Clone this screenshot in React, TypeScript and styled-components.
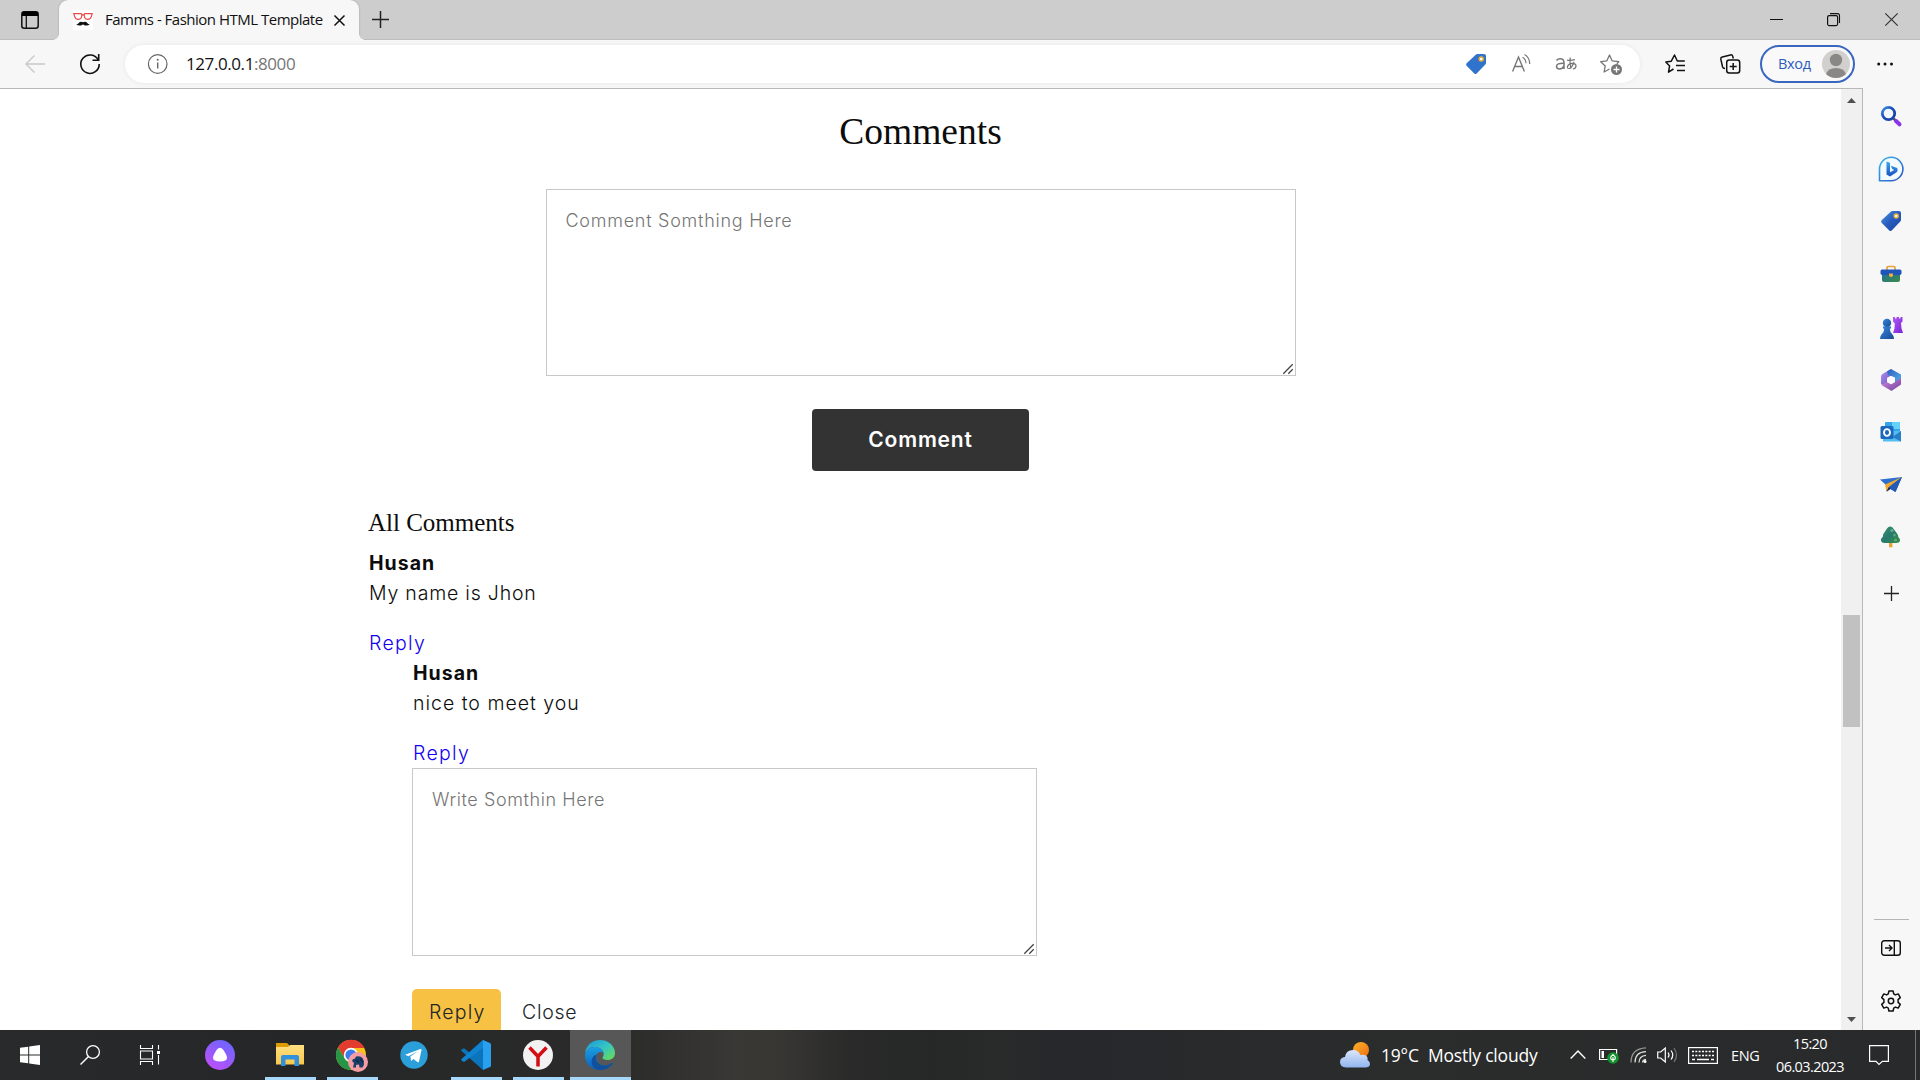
import React from "react";
import styled, { createGlobalStyle } from "styled-components";

const ui = `"Open Sans", "Noto Sans", sans-serif`;
const body = `Inter, "Open Sans", sans-serif`;
const serif = `"Liberation Serif", serif`;

const Global = createGlobalStyle`
  * { box-sizing: border-box; }
  html, body { margin: 0; padding: 0; background: #fff; overflow: hidden; }
  svg { display: block; flex: none; overflow: visible; }
  button { border: 0; background: none; padding: 0; margin: 0; font: inherit; color: inherit; }
`;

const Screen = styled.div`
  width: 1920px;
  height: 1080px;
  display: flex;
  flex-direction: column;
  overflow: hidden;
  font-family: ${ui};
`;

/* Title bar */
const TitleBar = styled.div`
  height: 40px;
  flex: none;
  display: flex;
  background: #cdcdcd;
  box-shadow: inset 0 -1px 0 #bdbdbd;
`;
const TabMenu = styled.div`
  width: 59px;
  padding: 11px 0 0 21px;
`;
const Tab = styled.div`
  position: relative;
  flex: none;
  width: 300px;
  height: 40px;
  display: flex;
  align-items: center;
  padding: 0 13px 0 14px;
  border-radius: 9px 9px 0 0;
  background: #f7f7f7;
  box-shadow: 0 0 2px rgba(0, 0, 0, 0.25);
  clip-path: inset(-3px -8px 0 -8px);
  &::before, &::after {
    content: "";
    position: absolute;
    bottom: 0;
    width: 6px;
    height: 6px;
  }
  &::before { left: -6px; background: radial-gradient(circle at 0 0, transparent 5.5px, #f7f7f7 6px); }
  &::after { right: -6px; background: radial-gradient(circle at 100% 0, transparent 5.5px, #f7f7f7 6px); }
`;
const TabTitle = styled.span`
  flex: none;
  width: 241px;
  padding: 0 0 2px 12px;
  white-space: nowrap;
  font-size: 15px;
  line-height: 20px;
  letter-spacing: -0.5px;
  color: #111;
`;
const NewTab = styled.div`
  padding: 11px 0 0 13px;
`;
const WindowControls = styled.div`
  display: flex;
  margin-left: auto;
  width: 173px;
  height: 40px;
  & > svg { margin-right: 37px; }
  padding: 0 0 0 17px;
`;

/* Toolbar */
const Toolbar = styled.div`
  height: 48px;
  flex: none;
  display: flex;
  align-items: center;
  background: #f7f7f7;
  padding-left: 25px;
`;
const Gap = styled.div<{ $w: number }>`
  width: ${(p) => p.$w}px;
  flex: none;
`;
const Omnibox = styled.div`
  width: 1515px;
  height: 38px;
  margin-left: 25px;
  border-radius: 19px;
  background: #fff;
  box-shadow: 0 0 5px rgba(0, 0, 0, 0.07);
  display: flex;
  align-items: center;
  padding-left: 23px;
`;
const Url = styled.span`
  width: 1297px;
  padding: 0 0 1px 18px;
  font-size: 17px;
  letter-spacing: -0.42px;
  line-height: 24px;
  color: #111;
  & > span { color: #767676; }
`;
const SignIn = styled.button`
  width: 95px;
  height: 38px;
  flex: none;
  border: 2px solid #3a66c0;
  border-radius: 19px;
  background: #f9f9f9;
  display: flex;
  align-items: center;
  justify-content: space-between;
  padding: 0 3px 0 16px;
  color: #2d5cbc;
  font-family: ${ui};
  font-size: 14.5px;
  line-height: 20px;
  letter-spacing: -0.3px;
`;

/* Page + sidebar */
const Main = styled.div`
  height: 942px;
  flex: none;
  display: flex;
  background: #f7f7f7;
`;
const Viewport = styled.div`
  width: 1863px;
  display: flex;
  background: #fff;
  border-top: 1px solid #b8b8b8;
  border-right: 1px solid #b8b8b8;
`;
const Page = styled.main`
  width: 1841px;
  height: 941px;
  overflow: hidden;
  display: flex;
  flex-direction: column;
  font-family: ${body};
  font-size: 19.5px;
  line-height: 30px;
  color: #0c0c0c;
`;
const Scrollbar = styled.div`
  width: 21px;
  background: #f0f0f0;
  display: flex;
  flex-direction: column;
  align-items: center;
`;
const Thumb = styled.div`
  width: 17px;
  height: 112px;
  background: #c1c1c1;
`;
const NewComment = styled.section`
  display: flex;
  flex-direction: column;
  align-items: center;
`;
const PageTitle = styled.h1`
  margin: 19px 0 0;
  height: 81px;
  font: 400 37.5px/48px ${serif};
`;
const FieldBox = styled.div<{ $w: number; $h: number }>`
  position: relative;
  flex: none;
  width: ${(p) => p.$w}px;
  height: ${(p) => p.$h}px;
  & > svg {
    position: absolute;
    right: 3px;
    bottom: 2px;
  }
`;
const Area = styled.textarea<{ $spacing: number }>`
  display: block;
  width: 100%;
  height: 100%;
  margin: 0;
  padding: 17px 18px 17px 19px;
  border: 1px solid #c8c8c8;
  border-radius: 0;
  background: #fff;
  outline: none;
  resize: none;
  font: 400 18px/27px ${body};
  letter-spacing: ${(p) => p.$spacing}px;
  &::placeholder { color: #757575; opacity: 1; font-weight: 300; }
`;
const SubmitButton = styled.button`
  width: 217px;
  height: 62px;
  margin-top: 33px;
  border-radius: 4px;
  background: #333;
  color: #fff;
  font: 600 21px/30px ${body};
  letter-spacing: 0.8px;
`;
const Thread = styled.section`
  padding: 37px 0 0 369px;
`;
const ThreadTitle = styled.h2`
  margin: 0 0 0 -1px;
  height: 40px;
  font: 400 25px/30px ${serif};
`;
const Comment = styled.article`
  height: 110px;
`;
const Replies = styled.div`
  padding-left: 43px;
  & > ${Comment} { padding-left: 1px; }
`;
const Author = styled.div`
  font-weight: 700;
  letter-spacing: 1px;
`;
const Message = styled.p<{ $spacing: number }>`
  margin: 0 0 20px;
  font-weight: 300;
  letter-spacing: ${(p) => p.$spacing}px;
`;
const ReplyLink = styled.a`
  display: block;
  font-weight: 300;
  letter-spacing: 1.3px;
  color: #1400ee;
`;
const Actions = styled.div`
  display: flex;
  margin-top: 33px;
  line-height: 30px;
`;
const ActionButton = styled.button<{ $primary?: boolean }>`
  height: 46px;
  padding: 0 17px;
  border-radius: 5px;
  font-weight: 300;
  letter-spacing: ${(p) => (p.$primary ? 1.2 : 0.7)}px;
  width: ${(p) => (p.$primary ? "89px" : "auto")};
  margin-right: 4px;
  background: ${(p) => (p.$primary ? "#f7c244" : "transparent")};
  color: #212529;
`;

const Sidebar = styled.aside`
  width: 57px;
  display: flex;
  flex-direction: column;
  align-items: center;
  padding-top: 2px;
`;
const SideItem = styled.div<{ $h?: number }>`
  height: ${(p) => p.$h ?? 52.4}px;
  width: 57px;
  display: flex;
  align-items: center;
  justify-content: center;
  padding-right: 1px;
`;
const SideFooter = styled.div`
  margin-top: auto;
  margin-bottom: 3px;
`;
const SideRule = styled.div`
  width: 35px;
  height: 1px;
  margin: 0 auto 2px 11px;
  background: #b5b5b5;
`;

/* Taskbar */
const Taskbar = styled.footer`
  height: 50px;
  flex: none;
  display: flex;
  align-items: center;
  color: #fff;
  background: linear-gradient(90deg, #282a2b 0, #242627 300px, #2b2b2a 620px, #393835 740px, #373633 780px, #2a2a2a 850px, #262727 930px, #292a2a 1000px, #27282b 1060px, #2b2c2c 1400px, #282a2b 1920px);
`;
const StartItem = styled.div`
  width: 60px;
  height: 50px;
  display: flex;
  align-items: center;
  justify-content: center;
`;
const AppItem = styled.div<{ $open?: boolean; $active?: boolean }>`
  width: 61px;
  height: 50px;
  margin-right: 1px;
  display: flex;
  flex-direction: column;
  align-items: center;
  justify-content: space-between;
  padding-top: 10px;
  background: ${(p) => (p.$active ? "#575757" : "transparent")};
  & > svg { margin-left: -1px; }
  &::after {
    content: "";
    height: 3px;
    width: ${(p) => (p.$active ? 61 : 51)}px;
    background: ${(p) => (p.$open ? "#a6d8fc" : "transparent")};
  }
`;
const Weather = styled.div`
  display: flex;
  align-items: center;
  margin-left: auto;
  width: 230px;
  font-size: 17.5px;
  letter-spacing: -0.2px;
  white-space: nowrap;
`;
const Degrees = styled.span`
  width: 58px;
  padding-left: 11px;
`;
const Tray = styled.div`
  display: flex;
  align-items: center;
  width: 350px;
  height: 50px;
`;
const Language = styled.span`
  width: 44px;
  padding-left: 13px;
  font-size: 14.5px;
  letter-spacing: -0.4px;
`;
const Clock = styled.div`
  width: 70px;
  margin-left: 13px;
  text-align: center;
  font-size: 14.5px;
  line-height: 23px;
  letter-spacing: -0.6px;
  white-space: nowrap;
`;
const DesktopEdge = styled.div`
  width: 1px;
  height: 50px;
  margin-left: 26px;
  background: #777;
`;

type IconProps = { w: number; h?: number; children: React.ReactNode };
const Icon = ({ w, h = w, children }: IconProps) => (
  <svg width={w} height={h} viewBox={`0 0 ${w} ${h}`} fill="none">{children}</svg>
);
type Stop = [number, string];
const Grad = ({ id, stops, v }: { id: string; stops: Stop[]; v?: boolean }) => (
  <linearGradient id={id} x1="0" y1="0" x2={v ? "0" : "1"} y2="1">
    {stops.map(([o, c]) => <stop key={o} offset={o} stopColor={c} />)}
  </linearGradient>
);

type FieldProps = { width: number; height: number; spacing: number; placeholder: string };
const Field = ({ width, height, spacing, placeholder }: FieldProps) => (
  <FieldBox $w={width} $h={height}>
    <Area $spacing={spacing} placeholder={placeholder} />
    <Icon w={10}><path d="M.3 9.700L9.700.3M5.300 9.700L9.700 5.300" stroke="#444" strokeWidth="1.300" /></Icon>
  </FieldBox>
);

const TabMenuIcon = () => (
  <Icon w={18}>
    <rect x="0.8" y="0.8" width="16.4" height="16.4" rx="2.5" stroke="#111" strokeWidth="1.5" />
    <path d="M1 1.5Q1.5 0.5 3 0.5h12Q16.7 0.5 17 2v3H1z" fill="#000" />
    <path d="M5.3 5v12" stroke="#111" strokeWidth="1.3" />
  </Icon>
);
const Favicon = () => (
  <Icon w={20}>
    <rect width="20" height="20" fill="#fff" />
    <g stroke="#e9494c" strokeWidth="1.2">
      <path d="M.8 3.700h7.200q1 0 .8 1.500-.3 4-3.300 4.200-3 .2-3.900-3zM19.200 3.700H12q-1 0-.8 1.500.3 4 3.300 4.200 3 .2 3.900-3z" />
      <path d="M8.7 5.2q1.300-1 2.600 0" />
    </g>
    <path d="M10 12.200q-2.800-1.200-4.200.8-.9 1.200-2.600 1.200 2 1.800 4.600 1.200 1.700-.4 2.200-1.200.5.800 2.200 1.200 2.600.6 4.600-1.200-1.700 0-2.600-1.200-1.400-2-4.200-.8z" fill="#111" />
  </Icon>
);
const Cross = ({ w, s = 1.4, c = "#222" }: { w: number; s?: number; c?: string }) => (
  <Icon w={w}><path d={`M.5.5L${w - 0.5} ${w - 0.5}M${w - 0.5}.5L.5 ${w - 0.5}`} stroke={c} strokeWidth={s} /></Icon>
);
const Plus = ({ w, s = 1.4 }: { w: number; s?: number }) => (
  <Icon w={w}><path d={`M${w / 2} 0v${w}M0 ${w / 2}h${w}`} stroke="#222" strokeWidth={s} /></Icon>
);
const TagIcon = ({ flat }: { flat?: boolean }) => (
  <Icon w={22}>
    <defs><Grad id="tag" stops={[[0, "#4599e6"], [0.5, "#285bbd"], [1, "#174a9e"]]} /></defs>
    <path d="M11 1.6Q11.7 1 12.6 1H19q2 0 2 2v7q0 .9-.7 1.6l-8.6 8.8q-1.2 1-2.4 0L1.6 12.7q-1-1.2 0-2.4z" fill={flat ? "#2f73cc" : "url(#tag)"} />
    <circle cx="16.2" cy="6" r="2" fill="#fff" stroke="#eab034" strokeWidth="1.5" />
  </Icon>
);

const Chrome = () => (
  <Icon w={32}>
    <circle cx="15" cy="15" r="15" fill="#fbc116" />
    <path d="M2 7.5A15 15 0 0 1 28.5 8H15a7 7 0 0 0-6.1 10.5z" fill="#e33b2e" />
    <path d="M2 7.5l6.900 11a7 7 0 0 0 8 3.300L15 30A15 15 0 0 1 2 7.500z" fill="#269547" />
    <circle cx="15" cy="15" r="7.2" fill="#fff" />
    <circle cx="15" cy="15" r="5.6" fill="#3b7ded" />
    <circle cx="22" cy="22" r="10" fill="#f59da4" />
    <path d="M16 21q.5-2.500 3-2.500l1-2q4.500-1 6.500 1.500 1.500 2 1.500 6.500l-1.500 3h-3l-.5-3-3 .5v2.500h-3l1-4.500z" fill="#1b3e68" />
    <path d="M20 20l3 2.500M24 19l3 3" stroke="#0d2646" strokeWidth="1.3" />
  </Icon>
);
const EdgeLogo = () => (
  <Icon w={30}>
    <defs>
      <Grad id="eTop" stops={[[0, "#1b95dc"], [0.5, "#35c4c4"], [1, "#6be04d"]]} />
      <Grad id="eLeft" v stops={[[0, "#1ba0e2"], [1, "#0a60c0"]]} />
    </defs>
    <path d="M0 13.5C1 5 7.500 0 15 0c9 0 15 6.500 15 13 0 4.500-3.500 7-7.500 7-3.500 0-5-1.300-5-2.300 0-.7 1.200-1.400 1.200-3.700C18.700 9.500 14 7 9.500 7 5 7 1.500 9.500 0 13.500z" fill="url(#eTop)" />
    <path d="M0 14.500C.8 10 5 7 9.500 7c5 0 8.500 2.500 9 6-1-1-2-1.400-3.300-1.200-3 .7-4.700 4-3.500 8 1.600 5 6.800 7 11.800 5.200C21 28.500 18 30 14.500 30 6 30-.4 23 0 14.500z" fill="url(#eLeft)" />
    <path d="M12.500 14c-2 2-1.800 6 0 8.200 3.400 4.300 9.500 4.300 14 .8.900-.6 1.500.2 1 1C24.800 28 20 30.200 15 30 9 29.500 6 25 6.600 20.500 7 17.200 9.500 14.800 12.500 14z" fill="#12509b" />
  </Icon>
);

const App = () => (
  <Screen>
    <Global />
    <TitleBar>
      <TabMenu><TabMenuIcon /></TabMenu>
      <Tab>
        <Favicon />
        <TabTitle>Famms - Fashion HTML Template</TabTitle>
        <Cross w={11} s={1.5} c="#111" />
      </Tab>
      <NewTab><Plus w={17} s={1.5} /></NewTab>
      <WindowControls>
        <Gap $w={6} />
        <Icon w={13} h={40}><path d="M0 19.5h13" stroke="#111" /></Icon>
        <Gap $w={7} />
        <Icon w={13} h={40}>
          <rect x=".6" y="15.600" width="10" height="10" rx="1.500" stroke="#111" strokeWidth="1.200" />
          <path d="M3 13.600h7.500q2 0 2 2V23" stroke="#111" strokeWidth="1.100" />
        </Icon>
        <Gap $w={8} />
        <Icon w={13} h={40}><path d="M.3 13.300l12.400 12.400M12.700 13.300L.3 25.700" stroke="#333" strokeWidth="1.200" /></Icon>
      </WindowControls>
    </TitleBar>

    <Toolbar>
      <Icon w={20}><path d="M20 10H1M9.500 1.500L1 10l8.500 8.500" stroke="#c9c9c9" strokeWidth="1.400" /></Icon>
      <Gap $w={35} />
      <Icon w={20}>
        <path d="M18.200 6A9.200 9.200 0 1 0 19.200 10" stroke="#111" strokeWidth="1.600" />
        <path d="M18.700 0v6.200h-6.200" stroke="#111" strokeWidth="1.600" />
      </Icon>
      <Omnibox>
        <Icon w={20}>
          <circle cx="9.700" cy="10" r="9.300" stroke="#666" strokeWidth="1.200" />
          <path d="M9.700 8.500v6" stroke="#666" strokeWidth="1.400" /><circle cx="9.700" cy="5.800" r="1" fill="#666" />
        </Icon>
        <Url>127.0.0.1<span>:8000</span></Url>
        <TagIcon flat />
        <Gap $w={25} />
        <Icon w={19} h={20}>
          <path d="M.6 17.500L6.500 3l5.900 14.500M2.600 12.500h7.800" stroke="#767676" strokeWidth="1.400" />
          <path d="M10.500 3.200q3.500 2 3.500 6M12.500.5q5.200 3 5.200 9.500" stroke="#767676" strokeWidth="1.200" />
        </Icon>
        <Gap $w={24} />
        <Icon w={22} h={20}>
          <path d="M1.500 6.500q1.200-1.700 3.700-1.700 3.800 0 3.800 4V15M9 9.200q-7.500-.2-7.500 3 0 2.700 3 2.700 3.300 0 4.500-3" stroke="#767676" strokeWidth="1.500" />
          <path d="M12 6.200q4 .6 8-.5M15.200 3.500q-.6 7 1 11M19 8q-2 6.500-5.200 6.500-1.800 0-1.300-2 1-3 4.500-3.200 4 0 4 2.700 0 2.500-3 3" stroke="#767676" strokeWidth="1.200" />
        </Icon>
        <Gap $w={23} />
        <Icon w={22} h={20}>
          <path d="M9.500 15l-5.400 3 1.100-6.100L.7 7.700l6.200-.9L9.500 1l2.600 5.800 6.700.9-2 2" stroke="#767676" strokeWidth="1.300" strokeLinejoin="round" />
          <circle cx="16.500" cy="15.500" r="5.500" fill="#767676" />
          <path d="M16.500 12.500v6M13.500 15.500h6" stroke="#fff" strokeWidth="1.300" />
        </Icon>
      </Omnibox>
      <Gap $w={25} />
      <Icon w={21} h={20}>
        <path d="M8.500 15l-5 3.200 1.100-6.300L.8 8l5.500-.8L9.500 1l2.800 6h7.500M11 11.500h9M12 16.500h8" stroke="#111" strokeWidth="1.500" strokeLinejoin="round" />
      </Icon>
      <Gap $w={34} />
      <Icon w={21} h={20}>
        <path d="M5 14.500Q3 14.500 2.600 13L.8 5.200Q.5 3.500 2.200 3L10.500.9q1.700-.4 2.200 1.200l.6 2.400" stroke="#111" strokeWidth="1.500" />
        <rect x="6.700" y="6" width="13" height="13" rx="2.500" stroke="#111" strokeWidth="1.500" />
        <path d="M13.200 9v7M9.700 12.500h7" stroke="#111" strokeWidth="1.500" />
      </Icon>
      <Gap $w={19} />
      <SignIn>
        Вход
        <Icon w={28}>
          <circle cx="14" cy="14" r="14" fill="#d2d0ce" />
          <circle cx="14" cy="10" r="6.200" fill="#8a8886" />
          <path d="M4 24q2-6 10-6t10 6q-4 4-10 4T4 24z" fill="#8a8886" />
        </Icon>
      </SignIn>
      <Gap $w={22} />
      <Icon w={16} h={4}><g fill="#111"><circle cx="1.700" cy="2" r="1.500" /><circle cx="8" cy="2" r="1.500" /><circle cx="14.500" cy="2" r="1.500" /></g></Icon>
    </Toolbar>

    <Main>
      <Viewport>
        <Page>
          <NewComment>
            <PageTitle>Comments</PageTitle>
            <Field width={750} height={187} spacing={0.74} placeholder="Comment Somthing Here" />
            <SubmitButton>Comment</SubmitButton>
          </NewComment>
          <Thread>
            <ThreadTitle>All Comments</ThreadTitle>
            <Comment>
              <Author>Husan</Author>
              <Message $spacing={0.8}>My name is Jhon</Message>
              <ReplyLink>Reply</ReplyLink>
            </Comment>
            <Replies>
              <Comment>
                <Author>Husan</Author>
                <Message $spacing={1}>nice to meet you</Message>
                <ReplyLink>Reply</ReplyLink>
              </Comment>
              <Field width={625} height={188} spacing={0.6} placeholder="Write Somthin Here" />
              <Actions>
                <ActionButton $primary>Reply</ActionButton>
                <ActionButton>Close</ActionButton>
              </Actions>
            </Replies>
          </Thread>
        </Page>
        <Scrollbar>
          <Icon w={21} h={526}><path d="M6 14l4.500-5 4.500 5z" fill="#505050" /></Icon>
          <Thumb />
          <Icon w={21} h={303}><path d="M6 290l4.500 5 4.500-5z" fill="#505050" /></Icon>
        </Scrollbar>
      </Viewport>
      <Sidebar>
        <SideItem>
          <Icon w={22}>
            <defs><Grad id="lens" stops={[[0, "#4a9be8"], [0.4, "#1b4fc0"], [1, "#1740a0"]]} /></defs>
            <path d="M13.500 13.500l2.500 2.500" stroke="#555" strokeWidth="2.500" />
            <path d="M16 16l3.500 3.300" stroke="#8a35e8" strokeWidth="4" strokeLinecap="round" />
            <circle cx="8.500" cy="8.500" r="6.200" fill="#f4f8fd" stroke="url(#lens)" strokeWidth="2.800" />
          </Icon>
        </SideItem>
        <SideItem>
          <Icon w={26}>
            <defs>
              <Grad id="bing" stops={[[0, "#39b5e8"], [1, "#2c53c8"]]} />
              <Grad id="bingB" v stops={[[0, "#39a8ee"], [1, "#1d50c0"]]} />
            </defs>
            <path d="M1.500 24.700V13A11.700 11.700 0 1 1 13.200 24.700z" fill="#f3fbff" stroke="url(#bing)" strokeWidth="1.600" strokeLinejoin="round" />
            <path d="M8.500 5.500l3.500 1.300v9.500l4.200-2.400-2-1-1.300-3.200 6.200 2.300q1.300 2.800-.8 4.600l-6.300 3.800-3.500-2z" fill="url(#bingB)" />
          </Icon>
        </SideItem>
        <SideItem><TagIcon /></SideItem>
        <SideItem $h={54.2}>
          <Icon w={22}>
            <defs><Grad id="box" stops={[[0, "#1f7298"], [1, "#3c8a48"]]} /></defs>
            <path d="M7 7V4.800Q7 3.500 8.300 3.500h5.400Q15 3.500 15 4.800V7" stroke="#e9a23b" strokeWidth="1.700" />
            <path d="M2 10h18v7q0 2-2 2H4q-2 0-2-2z" fill="url(#box)" />
            <path d="M.5 8Q.5 6.500 2 6.500h18q1.500 0 1.500 1.500v2.500Q21 12 19.500 12h-17Q1 12 .5 10.500z" fill="#1e55b8" />
            <path d="M9 10.500h4v2.300Q11 15.500 9 12.800z" fill="#f0ad3d" />
          </Icon>
        </SideItem>
        <SideItem>
          <Icon w={24} h={24}>
            <defs><Grad id="pawn" stops={[[0, "#3586dd"], [1, "#1b4a95"]]} /><Grad id="rook" stops={[[0, "#b05af5"], [1, "#7a22d6"]]} /></defs>
            <path d="M14 1h2v1.500h1.500V1h2.500v1.500h1.500V1h2v4.500L22 7l.5 5.500 1.500 4.500H14l1.500-4.500.3-5L14 5.500z" fill="url(#rook)" />
            <circle cx="8" cy="7" r="4.200" fill="url(#pawn)" />
            <path d="M4 10.500h8v2h-1.200q0 4 2.700 6 1.500 1.500 1.500 4.500H1q0-3 1.500-4.500 2.700-2 2.700-6H4z" fill="url(#pawn)" />
          </Icon>
        </SideItem>
        <SideItem>
          <Icon w={22}>
            <defs><Grad id="m1" stops={[[0, "#2c5dbb"], [1, "#58b4ee"]]} /><Grad id="m2" stops={[[0, "#b490ee"], [1, "#5a50c0"]]} /><Grad id="m3" stops={[[0, "#d08ae0"], [1, "#714298"]]} /></defs>
            <path d="M11 0l-8.500 5Q1 6 1 8v7l6 3.500V9l7-4z" fill="url(#m2)" />
            <path d="M11 0L21 5.500V15l-6-2V8.500L8 6 7 2.500z" fill="url(#m1)" />
            <path d="M21 9v6.500L11.500 22 1.500 16l5-3 5 2 9.500-6z" fill="url(#m3)" />
            <path d="M11 7l4 2v4l-4 2.300L7.200 13V9z" fill="#fafaff" />
          </Icon>
        </SideItem>
        <SideItem>
          <Icon w={22}>
            <path d="M5 1.500Q5 1 6 1h13q1 0 1 1v8H5z" fill="#35a5ea" /><path d="M12 1h8v7h-8z" fill="#64d1f8" />
            <path d="M3 10h18v10.500H3z" fill="#53bdf2" /><path d="M21 10v10.500L12.500 16z" fill="#287fc8" />
            <rect x=".5" y="5" width="13" height="13" rx="1.500" fill="#1b68bd" />
            <ellipse cx="7" cy="11.500" rx="3" ry="3.400" stroke="#fff" strokeWidth="1.900" />
          </Icon>
        </SideItem>
        <SideItem>
          <Icon w={22} h={18}>
            <path d="M0 3.500L22 1 15.500 16l-5-3-4 2.500L6 9z" fill="#2d6fd0" />
            <path d="M22 1L5 8.500l1.500 7L9 11z" fill="#f0a92e" /><path d="M22 1L9 11l-2.300 4.500 3.800-2.500 5 3z" fill="#2559b6" /><path d="M9 11l-2.300 4.500 3.500-3z" fill="#1d2430" />
          </Icon>
        </SideItem>
        <SideItem>
          <Icon w={22}>
            <defs><Grad id="tree" stops={[[0, "#3d936f"], [0.5, "#27796d"], [1, "#368f49"]]} /></defs>
            <path d="M9 16h3.400v5.300H9z" fill="#f0a23a" />
            <path d="M7 2.500Q8.500.3 10.500.5q2.500.3 3.500 3l3 4q1.500 2 1.300 3.500Q20.500 13 20 15q-.8 2-3.500 2h-12Q1.500 17 1 14.500q-.3-2 2-4Q2.500 8.500 4 7z" fill="url(#tree)" />
            <circle cx="12" cy="4.500" r="1.700" fill="#65aa86" /><circle cx="14.500" cy="9" r="1.500" fill="#5ca36e" /><circle cx="15.500" cy="14" r="1.500" fill="#62aa6b" />
          </Icon>
        </SideItem>
        <SideItem $h={60}><Plus w={15} s={1.3} /></SideItem>
        <SideFooter>
          <SideRule />
          <SideItem>
            <Icon w={20} h={16}>
              <rect x=".7" y=".7" width="18.600" height="14.600" rx="2.500" stroke="#111" strokeWidth="1.400" />
              <path d="M13.300 1v14M4 8h6.500M8 5l3 3-3 3" stroke="#111" strokeWidth="1.400" />
            </Icon>
          </SideItem>
          <SideItem>
            <svg width="22" height="22" viewBox="0 0 22 22" fill="none" stroke="#111" strokeWidth="1.500" strokeLinejoin="round">
              <path d="M8.900 1h4.200l.6 2.900 1.700 1 2.800-1 2.100 3.700-2.200 2v2.800l2.200 2-2.100 3.700-2.800-1-1.700 1-.6 2.900H8.900l-.6-2.900-1.700-1-2.800 1-2.100-3.700 2.200-2V9.600l-2.200-2 2.100-3.700 2.800 1 1.700-1z" />
              <circle cx="11" cy="11" r="2.700" />
            </svg>
          </SideItem>
        </SideFooter>
      </Sidebar>
    </Main>

    <Taskbar>
      <StartItem>
        <Icon w={20}><path d="M0 2.800L8.200 1.700v7.800H0zM9.200 1.500L20 0v9.500H9.200zM0 10.500h8.200v7.800L0 17.200zM9.200 10.500H20V20L9.200 18.500z" fill="#fff" /></Icon>
      </StartItem>
      <StartItem>
        <Icon w={20}><circle cx="13" cy="7" r="6.400" stroke="#fff" strokeWidth="1.300" /><path d="M8.500 11.500L.5 19.500" stroke="#fff" strokeWidth="1.500" /></Icon>
      </StartItem>
      <StartItem>
        <Icon w={20}><path d="M.5 0v3.500h12V0M.5 20v-3.500h12V20M.5 6h12v8H.500zM18.500 0v4.500M18.500 10v9.500" stroke="#fff" strokeWidth="1.100" /><rect x="17" y="6" width="3" height="3" fill="#fff" /></Icon>
      </StartItem>
      <Gap $w={10} />
      <StartItem>
        <Icon w={30}>
          <defs><linearGradient id="alice" x1=".2" y1="1" x2=".8" y2="0"><stop stopColor="#c04ff8" /><stop offset="1" stopColor="#6a66ff" /></linearGradient></defs>
          <circle cx="15" cy="15" r="15" fill="url(#alice)" />
          <path d="M15 7.700q2.200 0 3.600 2.600 3.500 5.500 3.400 7.400 0 3.800-7 3.800t-7-3.800q0-1.900 3.400-7.400Q12.800 7.700 15 7.700z" fill="#fff" />
        </Icon>
      </StartItem>
      <Gap $w={10} />
      <AppItem $open>
        <Icon w={28} h={28}>
          <defs><Grad id="folder" v stops={[[0, "#ffdf83"], [1, "#f9c84b"]]} /></defs>
          <path d="M0 3h11l2 2v4H0z" fill="#dd9b04" /><path d="M0 7h12l2-2h14v19.500H0z" fill="url(#folder)" />
          <path d="M5 26V17q0-2 2-2h14q2 0 2 2v9h-4.500v-6.500h-9V26z" fill="#3291dc" />
        </Icon>
      </AppItem>
      <AppItem $open><Chrome /></AppItem>
      <AppItem>
        <Icon w={28}>
          <circle cx="14" cy="15" r="13.700" fill="#2b9fd9" />
          <path d="M5 14.800L20.500 9q1.300-.3 1 1.300L19 21.500q-.4 1.300-1.600.6l-4-3-2.200 2-.9-4.600L18 11l-9.500 5.200z" fill="#fff" />
        </Icon>
      </AppItem>
      <AppItem $open>
        <Icon w={30}>
          <path d="M22 0L8.500 12.500 3 8.200.5 9.500q-.8.700 0 1.500L22 30l2-2V2z" fill="#0a75bd" />
          <path d="M22 8L3 22 .5 20.500q-.8-.7 0-1.500L22 0z" fill="#0f83cf" /><path d="M22 0l7 3q1 .5 1 1.500v21q0 1-1 1.500l-7 3z" fill="#28a0ee" />
        </Icon>
      </AppItem>
      <AppItem $open>
        <Icon w={30}>
          <circle cx="15" cy="15" r="15" fill="#f2f2f2" />
          <path d="M6.500 7.500l8.500 9 8.500-9M15 16v10.500" stroke="#d40d12" strokeWidth="3.500" />
        </Icon>
      </AppItem>
      <AppItem $open $active><EdgeLogo /></AppItem>

      <Weather>
        <Icon w={30} h={26}>
          <defs><Grad id="cloud" v stops={[[0, "#dbe7fb"], [1, "#91b4ee"]]} /><Grad id="sun" stops={[[0, "#fcb32c"], [1, "#ee6c10"]]} /></defs>
          <circle cx="21" cy="8" r="8" fill="url(#sun)" />
          <path d="M6 25.500Q0 25 0 20q0-4.500 5-5 1-7 8-7 5.500 0 7.300 5 4-1 6.200 1 1.700 1.700 1 4 2.500 1.500 2.500 4 0 3-4 3.500z" fill="url(#cloud)" />
        </Icon>
        <Degrees>19°C</Degrees>
        <span>Mostly cloudy</span>
      </Weather>
      <Tray>
        <Icon w={16} h={10}><path d="M.7 8.500L8 1l7.300 7.500" stroke="#fff" strokeWidth="1.400" /></Icon>
        <Gap $w={13} />
        <Icon w={20} h={16}>
          <path d="M.6 2.500h17v10H.6z" stroke="#fff" strokeWidth="1.200" /><path d="M2.500 4h2.500v7H2.500z" fill="#fff" />
          <circle cx="14" cy="11" r="5.800" fill="#12922b" /><path d="M14 7.500l2.200 2.500v2L14 13.300 11.800 12v-2zM14 10v5" stroke="#fff" strokeWidth="1.100" />
        </Icon>
        <Gap $w={11} />
        <Icon w={17} h={16}>
          <g stroke="#ddd" strokeWidth="1.200"><path d="M1 15.500Q1 1.500 16 .8" stroke="#999" /><path d="M5 15.500Q5 5 16 4.600M9 15.500Q9 9 16 8.400" /><path d="M12.500 15.500q0-2.500 3.500-3.200" /></g><circle cx="15" cy="14.500" r="1.500" fill="#fff" />
        </Icon>
        <Gap $w={10} />
        <Icon w={21} h={18}>
          <path d="M.7 6h3L8.300 2v14l-4.600-4h-3z" stroke="#fff" strokeWidth="1.200" />
          <path d="M11 6.500q2 2.500 0 5M14 4.500q3.500 4.500 0 9" stroke="#fff" strokeWidth="1.200" /><path d="M17 2q5 7 0 14" stroke="#777" strokeWidth="1.200" />
        </Icon>
        <Gap $w={10} />
        <Icon w={30} h={17}>
          <rect x=".6" y=".6" width="28.800" height="15.800" stroke="#fff" strokeWidth="1.200" />
          <path d="M4 4.500h22M4 8.500h22" stroke="#fff" strokeWidth="1.500" strokeDasharray="2 1.330" /><path d="M4 12.500h3M9 12.500h12M23 12.500h3" stroke="#fff" strokeWidth="1.300" />
        </Icon>
        <Language>ENG</Language>
        <Clock>15:20<br />06.03.2023</Clock>
        <Gap $w={24} />
        <Icon w={20} h={20}><path d="M.6.6h18.800v15.800h-6L10 19.500l-3-3.100H.6z" stroke="#fff" strokeWidth="1.200" /></Icon>
        <DesktopEdge />
      </Tray>
    </Taskbar>
  </Screen>
);

export default App;
